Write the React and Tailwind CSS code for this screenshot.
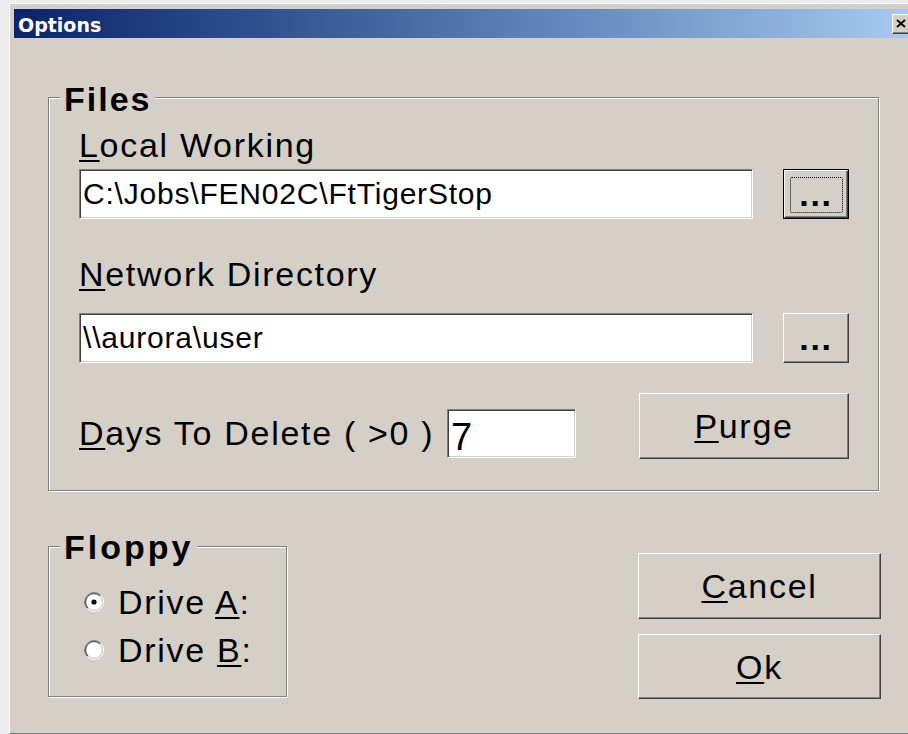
import React from 'react'

// shared text styles for the dialog
const sans = "font-['Liberation_Sans',Arial,sans-serif]"
const label = 'text-[34px] leading-[38px] tracking-[1.7px] text-black whitespace-nowrap'

function Key({ children }) {
  return <span className="underline decoration-2 underline-offset-[3px]">{children}</span>
}

function RaisedButton({ className = '', textClass = '', children }) {
  return (
    <button
      type="button"
      className={`flex items-center justify-center bg-[#d4d0c8] border border-t-white border-l-white border-r-[#404040] border-b-[#404040] shadow-[inset_-1px_-1px_0_#808080] ${label} ${textClass} ${className}`}
    >
      {children}
    </button>
  )
}

// default push button: black frame plus dotted focus rectangle
function DefaultButton({ children }) {
  return (
    <div className="relative w-[66px] h-[50px] shrink-0 border border-black">
      <RaisedButton className="w-full h-full" textClass="font-bold tracking-[0.5px]">
        {children}
      </RaisedButton>
      <span className="absolute left-[6px] right-[5px] top-[7px] bottom-[5px] border border-dotted border-black rounded-[2px] pointer-events-none" />
    </div>
  )
}

function Field({ value, className = '', textClass = 'text-[30px] leading-[34px] tracking-[0.8px]' }) {
  return (
    <input
      type="text"
      readOnly
      value={value}
      className={`bg-white border border-t-[#808080] border-l-[#808080] border-r-white border-b-white shadow-[inset_1px_1px_0_#404040,inset_-1px_-1px_0_#d4d0c8] pl-[3px] outline-none text-black ${textClass} ${className}`}
    />
  )
}

function GroupBox({ title, titleClass = '', className = '', children }) {
  return (
    <div
      className={`relative border border-[#808080] shadow-[inset_1px_1px_0_#fff,1px_1px_0_#fff] ${className}`}
    >
      <span
        className={`absolute left-[11px] bg-[#d4d0c8] px-[4px] font-bold text-[34px] leading-[38px] text-black ${titleClass}`}
      >
        {title}
      </span>
      {children}
    </div>
  )
}

function Radio({ checked }) {
  return (
    <svg width="20" height="20" viewBox="0 0 20 20" className="shrink-0">
      <circle cx="10" cy="10" r="8" fill="#fff" />
      <path d="M3.28 16.72 A9.5 9.5 0 0 1 16.72 3.28" fill="none" stroke="#808080" strokeWidth="1" />
      <path d="M16.72 3.28 A9.5 9.5 0 0 1 3.28 16.72" fill="none" stroke="#fff" strokeWidth="1" />
      <path d="M3.99 16.01 A8.5 8.5 0 0 1 16.01 3.99" fill="none" stroke="#404040" strokeWidth="1" />
      <path d="M16.01 3.99 A8.5 8.5 0 0 1 3.99 16.01" fill="none" stroke="#d4d0c8" strokeWidth="1" />
      {checked && <circle cx="10" cy="10" r="2.6" fill="#000" />}
    </svg>
  )
}

function TitleBar() {
  return (
    <div className="flex items-center justify-between w-[896px] h-[29px] pl-[4px] bg-linear-to-r from-[#0a246a] to-[#a6caf0]">
      <span className="pt-[2px] font-['DejaVu_Sans',Verdana,sans-serif] font-bold text-[19px] leading-[22px] text-white">
        Options
      </span>
      <button
        type="button"
        className="flex items-center justify-center w-[18px] h-[20px] bg-[#d4d0c8] border border-t-white border-l-white border-r-[#404040] border-b-[#404040] shadow-[inset_-1px_-1px_0_#808080]"
      >
        <svg width="10" height="9" viewBox="0 0 10 9">
          <path d="M1 1 L9 8 M9 1 L1 8" stroke="#000" strokeWidth="2" />
        </svg>
      </button>
    </div>
  )
}

export default function App() {
  return (
    <div className={`w-[908px] h-[734px] overflow-hidden bg-[#ececec] pt-[3px] pl-[9px] ${sans}`}>
      <div className="w-[920px] h-[731px] bg-[#d4d0c8] border-t border-l border-b border-t-white border-l-white border-b-[#808080] pt-[5px] pl-[4px]">
        <TitleBar />

        {/* Files */}
        <GroupBox
          title="Files"
          titleClass="-top-[18px] tracking-[2px]"
          className="ml-[34px] mt-[59px] w-[831px] h-[394px] pl-[30px] pr-[29px] pt-[28px] flex flex-col"
        >
          <div className={label}>
            <Key>L</Key>ocal Working
          </div>
          <div className="mt-[5px] flex gap-[30px]">
            <Field value="C:\Jobs\FEN02C\FtTigerStop" className="flex-1 min-w-0 h-[50px]" />
            <DefaultButton>...</DefaultButton>
          </div>

          <div className={`mt-[36px] ${label}`}>
            <Key>N</Key>etwork Directory
          </div>
          <div className="mt-[20px] flex gap-[30px]">
            <Field value="\\aurora\user" className="flex-1 min-w-0 h-[50px]" />
            <RaisedButton className="w-[66px] h-[50px] shrink-0" textClass="font-bold tracking-[0.5px]">
              ...
            </RaisedButton>
          </div>

          <div className="mt-[30px] flex items-start">
            <div className={`w-[368px] mt-[21px] ${label}`}>
              <Key>D</Key>ays To Delete ( &gt;0 )
            </div>
            <Field
              value="7"
              className="w-[129px] h-[49px] mt-[16px] pt-[8px]"
              textClass="text-[38px] leading-[40px]"
            />
            <RaisedButton className="ml-auto w-[210px] h-[66px]">
              <Key>P</Key>urge
            </RaisedButton>
          </div>
        </GroupBox>

        <div className="mt-[55px] ml-[34px] flex items-start">
          {/* Floppy */}
          <GroupBox
            title="Floppy"
            titleClass="-top-[19px] tracking-[3px]"
            className="w-[239px] h-[151px] pl-[35px] pt-[36px] flex flex-col gap-[10px]"
          >
            <div className={`flex items-center gap-[14px] ${label}`}>
              <Radio checked />
              <span>
                Drive <Key>A</Key>:
              </span>
            </div>
            <div className={`flex items-center gap-[14px] ${label}`}>
              <Radio />
              <span>
                Drive <Key>B</Key>:
              </span>
            </div>
          </GroupBox>

          <div className="ml-[351px] mt-[7px] flex flex-col gap-[15px]">
            <RaisedButton className="w-[243px] h-[66px]">
              <Key>C</Key>ancel
            </RaisedButton>
            <RaisedButton className="w-[243px] h-[65px]">
              <Key>O</Key>k
            </RaisedButton>
          </div>
        </div>
      </div>
    </div>
  )
}
